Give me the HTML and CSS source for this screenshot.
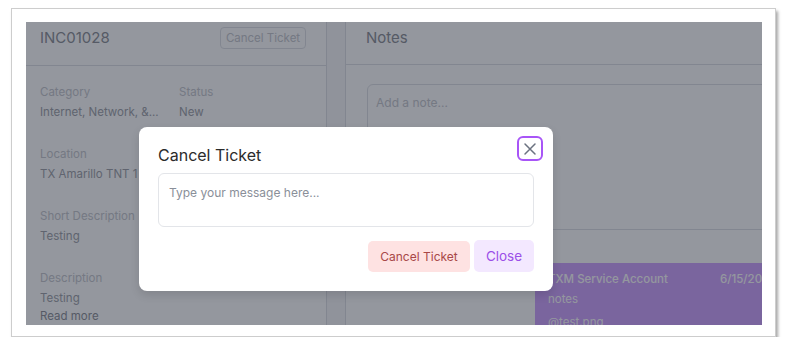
FILE: index.html
```html
<!DOCTYPE html>
<html lang="en">
<head>
    <meta charset="UTF-8">
    <meta name="viewport" content="width=device-width, initial-scale=1.0">
    <title>INC01028 - Cancel Ticket</title>
    <link rel="stylesheet" href="styles.css">
</head>
<body>
    <div class="frame">
        <div class="screen">
            <div class="app">
                <!-- Ticket details -->
                <div class="ticket-card">
                    <div class="card-header">
                        <h1>INC01028</h1>
                        <button class="outline-button">Cancel Ticket</button>
                    </div>
                    <div class="fields">
                        <div class="field">
                            <div class="label">Category</div>
                            <div class="value">Internet, Network, &amp;...</div>
                        </div>
                        <div class="field">
                            <div class="label">Status</div>
                            <div class="value">New</div>
                        </div>
                        <div class="field">
                            <div class="label">Location</div>
                            <div class="value">TX Amarillo TNT 1</div>
                        </div>
                        <div class="field"></div>
                        <div class="field wide">
                            <div class="label">Short Description</div>
                            <div class="value">Testing</div>
                        </div>
                        <div class="field wide">
                            <div class="label">Description</div>
                            <div class="value">Testing</div>
                            <div class="read-more">Read more</div>
                        </div>
                    </div>
                </div>

                <!-- Notes -->
                <div class="notes-card">
                    <div class="card-header">
                        <h2>Notes</h2>
                    </div>
                    <div class="composer">
                        <div class="note-input">Add a note...</div>
                    </div>
                    <div class="note-list">
                        <div class="note-bubble">
                            <div class="note-top">
                                <span class="note-author">TXM Service Account</span>
                                <span class="note-date">6/15/2023 10:42 AM</span>
                            </div>
                            <div class="note-text">notes</div>
                            <div class="note-file">@test.png</div>
                        </div>
                    </div>
                </div>
            </div>

            <div class="overlay">
                <div class="modal">
                    <button class="modal-close" aria-label="Close">
                        <svg width="14" height="14" viewBox="0 0 14 14" fill="none" stroke="#6b7280" stroke-width="1.5" stroke-linecap="round">
                            <path d="M2 2 L12 12 M12 2 L2 12"/>
                        </svg>
                    </button>
                    <h3>Cancel Ticket</h3>
                    <div class="message-box">Type your message here...</div>
                    <div class="modal-actions">
                        <button class="danger-button">Cancel Ticket</button>
                        <button class="soft-button">Close</button>
                    </div>
                </div>
            </div>
        </div>
    </div>
</body>
</html>
```

FILE: styles.css
```css
:root {
    --line: #dfe1e6;
    --title: #8e9198;
    --value: #a0a3aa;
    --label: #c6c8ce;
    --purple: #a855f7;
}

body {
    margin: 0;
    background: #ffffff;
    font-family: Inter, "Noto Sans", sans-serif;
}

.frame {
    box-sizing: border-box;
    width: 765px;
    height: 329px;
    margin: 8px 0 0 11px;
    padding: 13px 0 0 14px;
    border: 1px solid #cdcdcd;
    box-shadow: 2px 3px 3px rgba(0, 0, 0, 0.35);
    background: #ffffff;
}

.screen {
    position: relative;
    width: 736px;
    height: 303px;
    overflow: hidden;
    background: #f7f8fa;
}

.app {
    display: flex;
    gap: 18px;
    height: 100%;
}

.ticket-card {
    width: 300px;
    flex-shrink: 0;
    background: #ffffff;
    border-right: 1px solid var(--line);
}

.card-header {
    box-sizing: border-box;
    height: 44px;
    display: flex;
    align-items: flex-start;
    justify-content: space-between;
    padding: 5px 20px 0 14px;
    border-bottom: 1px solid var(--line);
}

.card-header h1,
.card-header h2 {
    margin: 0;
    font-size: 15px;
    font-weight: 400;
    line-height: 21px;
    color: var(--title);
}

.outline-button {
    height: 22px;
    width: 86px;
    padding: 0;
    font-family: inherit;
    font-size: 11.5px;
    color: var(--label);
    background: #ffffff;
    border: 1px solid var(--line);
    border-radius: 4px;
}

.fields {
    display: grid;
    grid-template-columns: 139px 1fr;
    row-gap: 22px;
    padding: 16px 14px 0;
}

.field.wide {
    grid-column: 1 / 3;
}

.label,
.value,
.read-more {
    font-size: 11.5px;
    line-height: 20px;
    white-space: nowrap;
}

.label {
    color: var(--label);
}

.value {
    color: var(--value);
}

.read-more {
    line-height: 16px;
    color: #8e9198;
}

.notes-card {
    width: 460px;
    flex-shrink: 0;
    background: #ffffff;
    border-left: 1px solid var(--line);
}

.notes-card .card-header {
    height: 43px;
    padding-left: 20px;
}

.composer {
    padding: 19px 0 0 21px;
}

.note-input {
    box-sizing: border-box;
    height: 146px;
    padding: 10px 8px;
    font-size: 12px;
    color: var(--label);
    border: 1px solid var(--line);
    border-radius: 6px;
}

.note-list {
    padding: 33px 0 0 189px;
}

.note-bubble {
    width: 270px;
    padding: 6px 13px;
    background: #d0a4ff;
    color: #ffffff;
    font-size: 11.5px;
    line-height: 20px;
}

.note-top {
    display: flex;
    gap: 52px;
    font-weight: 500;
    white-space: nowrap;
}

.note-file {
    margin-top: 3px;
}

.overlay {
    position: absolute;
    inset: 0;
    background: rgba(17, 24, 39, 0.45);
}

.modal {
    position: absolute;
    left: 113px;
    top: 105px;
    box-sizing: border-box;
    width: 414px;
    height: 164px;
    padding: 18px 19px 20px;
    background: #ffffff;
    border-radius: 8px;
    box-shadow: 0 4px 10px rgba(0, 0, 0, 0.12);
}

.modal h3 {
    margin: 0 0 8px;
    font-size: 16px;
    font-weight: 400;
    line-height: 20px;
    color: #2b2b2b;
}

.modal-close {
    position: absolute;
    top: 9px;
    right: 10px;
    width: 26px;
    height: 25px;
    padding: 0;
    display: flex;
    align-items: center;
    justify-content: center;
    background: #ffffff;
    border: 2px solid var(--purple);
    border-radius: 6px;
}

.message-box {
    box-sizing: border-box;
    height: 54px;
    padding: 11px 10px;
    font-size: 12px;
    color: #8a8f99;
    border: 1px solid #e3e5e9;
    border-radius: 6px;
}

.modal-actions {
    display: flex;
    justify-content: flex-end;
    align-items: flex-end;
    gap: 4px;
    margin-top: 13px;
}

.danger-button,
.soft-button {
    border: none;
    border-radius: 5px;
    font-family: inherit;
    padding: 0;
}

.danger-button {
    width: 102px;
    height: 31px;
    font-size: 12px;
    background: #fee2e2;
    color: #a84848;
}

.soft-button {
    width: 60px;
    height: 32px;
    font-size: 13.5px;
    background: #f3e8ff;
    color: #9b4fe8;
}
```
